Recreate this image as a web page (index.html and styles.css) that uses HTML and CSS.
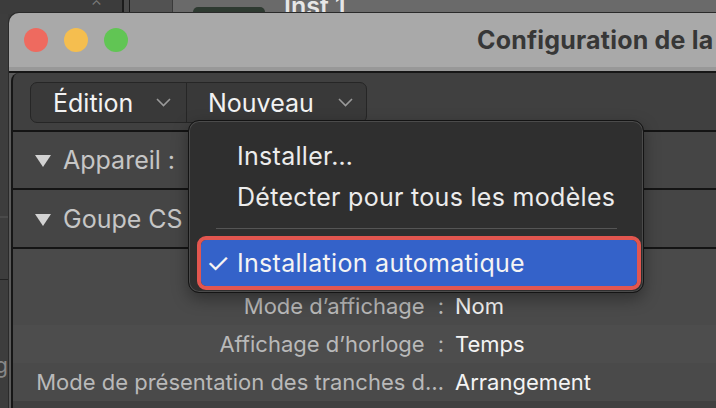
FILE: index.html
```html
<!DOCTYPE html>
<html>
<head>
    <title>Configuration de la surface de contrôle</title>
    <meta name="viewport" content="width=device-width, initial-scale=1">
    <link rel="stylesheet" href="styles.css">
</head>
<body>

    <div class="desk">
        <div class="desk-top">
            <div class="cell cell-a"><span class="arrows">⌃</span></div>
            <div class="cell cell-b"></div>
            <div class="cell cell-c"></div>
            <div class="cell cell-d">
                <span class="pill"></span>
                <span class="track-name">Inst 1</span>
            </div>
        </div>
        <div class="desk-left">
            <div class="strip s1"></div>
            <div class="strip s2"></div>
            <div class="strip s3"><span>g</span></div>
        </div>
    </div>

    <div class="window">
        <div class="titlebar">
            <span class="light red"></span>
            <span class="light yellow"></span>
            <span class="light green"></span>
            <span class="title">Configuration de la surface de contrôle</span>
        </div>

        <div class="frame">
            <div class="panel">
                <div class="toolbar">
                    <div class="segmented">
                        <div class="seg seg-edit">
                            <span>Édition</span>
                            <svg class="chev" width="15" height="9" viewBox="0 0 15 9"><path d="M1 1 L7.5 7.5 L14 1" fill="none" stroke="#9a9a9a" stroke-width="1.6"/></svg>
                        </div>
                        <div class="seg seg-new">
                            <span>Nouveau</span>
                            <svg class="chev" width="15" height="9" viewBox="0 0 15 9"><path d="M1 1 L7.5 7.5 L14 1" fill="none" stroke="#9a9a9a" stroke-width="1.6"/></svg>
                        </div>
                    </div>
                </div>

                <div class="section first">
                    <span class="tri"></span>
                    <span>Appareil :</span>
                </div>
                <div class="section">
                    <span class="tri"></span>
                    <span>Goupe CS</span>
                </div>

                <div class="props">
                    <div class="prop-row">
                        <span class="label">Mode d’affichage<span class="colon">:</span></span>
                        <span class="value">Nom</span>
                    </div>
                    <div class="prop-row alt">
                        <span class="label">Affichage d’horloge<span class="colon">:</span></span>
                        <span class="value">Temps</span>
                    </div>
                    <div class="prop-row">
                        <span class="label">Mode de présentation des tranches d…</span>
                        <span class="value">Arrangement</span>
                    </div>
                </div>
            </div>
        </div>
    </div>

    <div class="menu">
        <div class="menu-item">Installer…</div>
        <div class="menu-item">Détecter pour tous les modèles</div>
        <div class="menu-sep"></div>
        <div class="menu-item checked"><span class="check">✓</span>Installation automatique</div>
    </div>

</body>
</html>
```

FILE: styles.css
```css
* {
    box-sizing: border-box;
}

body {
    margin: 0;
    width: 716px;
    height: 408px;
    overflow: hidden;
    position: relative;
    background-color: #3a3a3a;
    font-family: Inter, "Noto Sans", sans-serif;
}

/* app behind the window */
.desk-top {
    display: flex;
    height: 14px;
}

.cell {
    height: 100%;
    position: relative;
    overflow: hidden;
}

.cell-a {
    width: 124px;
    background-color: #3c3c3c;
    border-right: 2px solid #1c1c1c;
}

.arrows {
    position: absolute;
    left: 91px;
    top: -3px;
    color: #7a7a7a;
    font-size: 14px;
}

.cell-b {
    width: 6px;
    background-color: #4a4a4a;
    border-right: 1px solid #1c1c1c;
}

.cell-c {
    width: 43px;
    background-color: #525252;
    border-right: 1px solid #3a3a3a;
}

.cell-d {
    flex: 1;
    background-color: #6a6a6a;
}

.pill {
    position: absolute;
    left: 20px;
    top: 7px;
    width: 72px;
    height: 14px;
    border-radius: 5px;
    background-color: #2e3a31;
}

.track-name {
    position: absolute;
    left: 111px;
    top: -9px;
    color: #e6e6e6;
    font-size: 25px;
    font-weight: 600;
}

.desk-left {
    width: 8px;
    display: flex;
    flex-direction: column;
}

.strip {
    height: 62px;
    border-bottom: 1px solid #222;
    background-color: #3d3d3d;
}

.s1 {
    height: 204px;
    border-bottom: 2px solid #4a4a4a;
}

.s3 {
    height: 130px;
    position: relative;
    overflow: hidden;
}

.s3 span {
    position: absolute;
    right: 0;
    top: 72px;
    color: #888;
    font-size: 22px;
}

/* the window */
.window {
    position: absolute;
    left: 8px;
    top: 12px;
    width: 740px;
    height: 396px;
    display: flex;
    flex-direction: column;
    border-top-left-radius: 11px;
    overflow: hidden;
    border-top: 1px solid #2a2a2a;
    border-left: 1px solid #2a2a2a;
}

.titlebar {
    height: 58px;
    flex-shrink: 0;
    display: flex;
    align-items: center;
    gap: 16px;
    padding-left: 15px;
    background-color: #a9a9a9;
    border-bottom: 4px solid #989898;
}

.light {
    width: 24px;
    height: 24px;
    border-radius: 50%;
    flex-shrink: 0;
}

.red { background-color: #ee6a5f; }
.yellow { background-color: #f5be4f; }
.green { background-color: #61c554; }

.title {
    margin-left: 333px;
    white-space: nowrap;
    color: #373737;
    font-size: 25px;
    font-weight: 700;
    letter-spacing: 0.2px;
}

.frame {
    flex: 1;
    background-color: #5a5a5a;
    border-top: 2px solid #161616;
    padding-left: 2px;
}

.panel {
    height: 100%;
    background-color: #404040;
    border-left: 2px solid #161616;
    border-top-left-radius: 8px;
    overflow: hidden;
}

.toolbar {
    height: 57px;
    padding: 9px 0 0 17px;
}

.segmented {
    display: inline-flex;
    height: 41px;
    border: 1px solid #262626;
    border-radius: 7px;
    background-color: #393939;
    overflow: hidden;
}

.seg {
    display: flex;
    align-items: center;
    color: #f2f2f2;
    font-size: 25px;
}

.seg-edit {
    width: 156px;
    padding-left: 22px;
    border-right: 1px solid #262626;
}

.seg-edit .chev {
    margin-left: 23px;
}

.seg-new {
    width: 179px;
    padding-left: 21px;
}

.seg-new .chev {
    margin-left: 24px;
}

.section {
    height: 59px;
    display: flex;
    align-items: center;
    gap: 12px;
    padding-left: 22px;
    background-color: #454545;
    border-top: 2px solid #141414;
    color: #c6c6c6;
    font-size: 25px;
}

.section.first {
    height: 58px;
}

.tri {
    width: 0;
    height: 0;
    margin-top: 2px;
    border-left: 8px solid transparent;
    border-right: 8px solid transparent;
    border-top: 12px solid #d2d2d2;
}

.props {
    border-top: 2px solid #141414;
    background-color: #4a4a4a;
    padding-top: 38px;
}

.prop-row {
    height: 38px;
    display: flex;
    align-items: center;
    font-size: 22px;
}

.prop-row.alt {
    background-color: #4d4d4d;
}

.label {
    width: 431px;
    text-align: right;
    white-space: nowrap;
    color: #b9b9b9;
}

.colon {
    margin-left: 13px;
}

.value {
    margin-left: 11px;
    color: #f4f4f4;
}

/* dropdown menu */
.menu {
    position: absolute;
    left: 188px;
    top: 120px;
    width: 456px;
    height: 173px;
    padding: 14px 0 6px;
    background-color: #2f2f2f;
    border: 1px solid #141414;
    border-radius: 11px;
    box-shadow: inset 0 0 0 1px #4b4b4b, 0 6px 16px rgba(0,0,0,0.35);
}

.menu-item {
    height: 41px;
    display: flex;
    align-items: center;
    padding-left: 48px;
    color: #ececec;
    font-size: 25px;
    letter-spacing: 0.3px;
}

.menu-sep {
    height: 1px;
    margin: 11px 26px 11px 27px;
    background-color: #555;
}

.menu-item.checked {
    height: 46px;
    margin: 0 6px 0 12px;
    padding-left: 5px;
    background-color: #3462c9;
    border-radius: 5px;
    outline: 4px solid #e2564f;
    color: #f4f4f4;
}

.check {
    width: 31px;
    font-size: 27px;
}
```
